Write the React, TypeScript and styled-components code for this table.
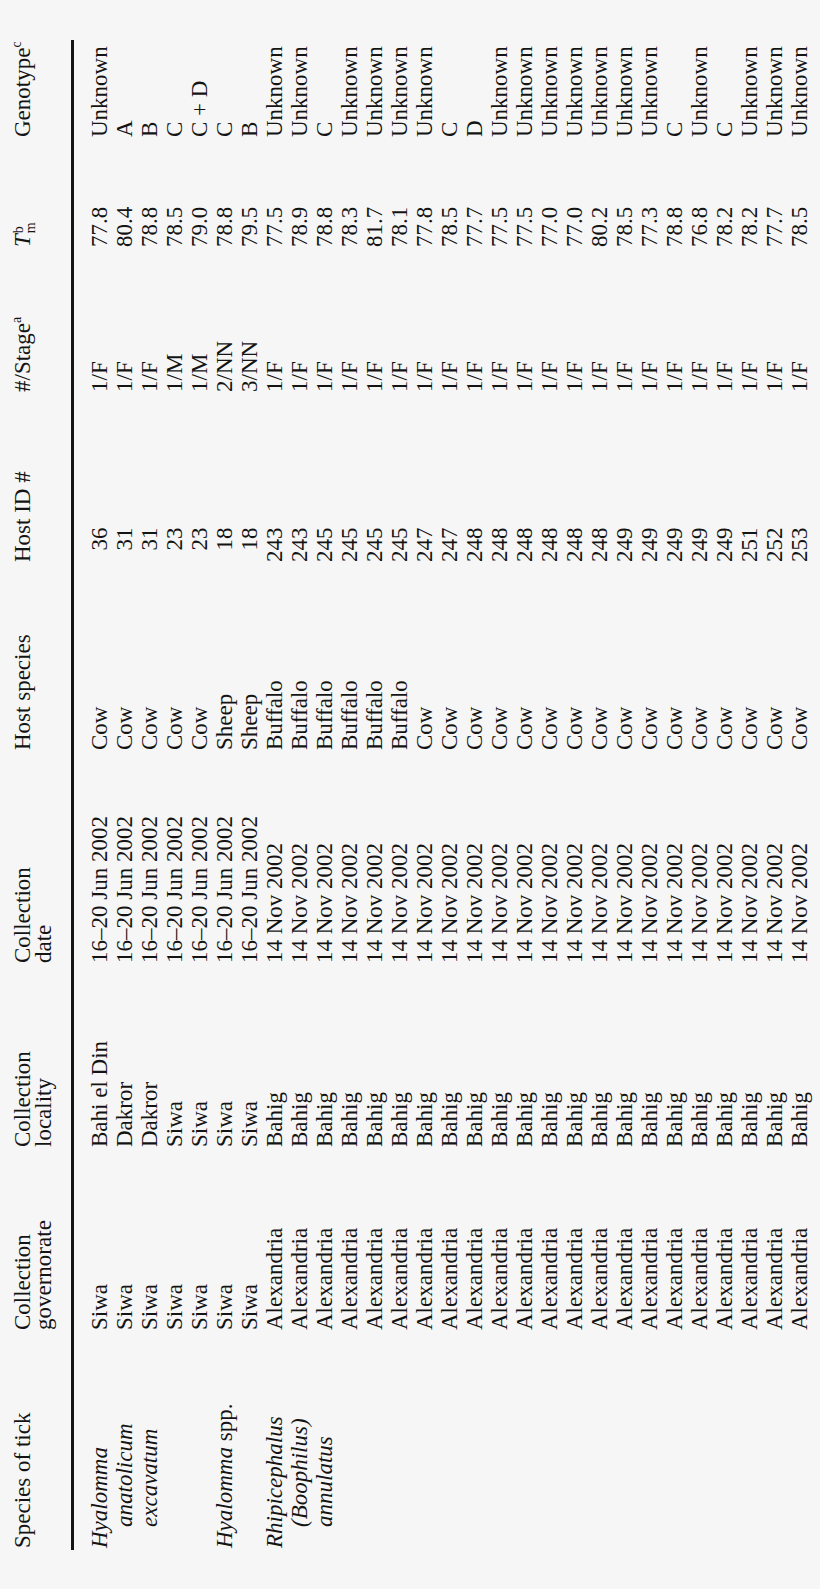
import React from 'react';
import styled, { createGlobalStyle } from 'styled-components';

// column widths of the unrotated table, left to right
const COLUMNS = '218px 183px 184px 213px 188px 170px 145px 110px 99px';

type Row = {
  species?: React.ReactNode;
  indent?: boolean;
  governorate: string;
  locality: string;
  date: string;
  host: string;
  hostId: string;
  stage: string;
  tm: string;
  genotype: string;
};

const JUN = '16–20 Jun 2002';
const NOV = '14 Nov 2002';

const siwa = (r: Partial<Row>): Row => ({
  governorate: 'Siwa',
  locality: 'Siwa',
  date: JUN,
  host: 'Cow',
  hostId: '',
  stage: '1/F',
  tm: '',
  genotype: 'Unknown',
  ...r,
});

const bahig = (r: Partial<Row>): Row => ({
  governorate: 'Alexandria',
  locality: 'Bahig',
  date: NOV,
  host: 'Cow',
  hostId: '',
  stage: '1/F',
  tm: '',
  genotype: 'Unknown',
  ...r,
});

const rows: Row[] = [
  siwa({ species: <em>Hyalomma</em>, locality: 'Bahi el Din', hostId: '36', tm: '77.8' }),
  siwa({ species: <em>anatolicum</em>, indent: true, locality: 'Dakror', hostId: '31', tm: '80.4', genotype: 'A' }),
  siwa({ species: <em>excavatum</em>, indent: true, locality: 'Dakror', hostId: '31', tm: '78.8', genotype: 'B' }),
  siwa({ hostId: '23', stage: '1/M', tm: '78.5', genotype: 'C' }),
  siwa({ hostId: '23', stage: '1/M', tm: '79.0', genotype: 'C + D' }),
  siwa({
    species: (
      <>
        <em>Hyalomma</em> spp.
      </>
    ),
    host: 'Sheep',
    hostId: '18',
    stage: '2/NN',
    tm: '78.8',
    genotype: 'C',
  }),
  siwa({ host: 'Sheep', hostId: '18', stage: '3/NN', tm: '79.5', genotype: 'B' }),
  bahig({ species: <em>Rhipicephalus</em>, host: 'Buffalo', hostId: '243', tm: '77.5' }),
  bahig({ species: <em>(Boophilus)</em>, indent: true, host: 'Buffalo', hostId: '243', tm: '78.9' }),
  bahig({ species: <em>annulatus</em>, indent: true, host: 'Buffalo', hostId: '245', tm: '78.8', genotype: 'C' }),
  bahig({ host: 'Buffalo', hostId: '245', tm: '78.3' }),
  bahig({ host: 'Buffalo', hostId: '245', tm: '81.7' }),
  bahig({ host: 'Buffalo', hostId: '245', tm: '78.1' }),
  bahig({ hostId: '247', tm: '77.8' }),
  bahig({ hostId: '247', tm: '78.5', genotype: 'C' }),
  bahig({ hostId: '248', tm: '77.7', genotype: 'D' }),
  bahig({ hostId: '248', tm: '77.5' }),
  bahig({ hostId: '248', tm: '77.5' }),
  bahig({ hostId: '248', tm: '77.0' }),
  bahig({ hostId: '248', tm: '77.0' }),
  bahig({ hostId: '248', tm: '80.2' }),
  bahig({ hostId: '249', tm: '78.5' }),
  bahig({ hostId: '249', tm: '77.3' }),
  bahig({ hostId: '249', tm: '78.8', genotype: 'C' }),
  bahig({ hostId: '249', tm: '76.8' }),
  bahig({ hostId: '249', tm: '78.2', genotype: 'C' }),
  bahig({ hostId: '251', tm: '78.2' }),
  bahig({ hostId: '252', tm: '77.7' }),
  bahig({ hostId: '253', tm: '78.5' }),
];

const App = () => {
  return (
    <Page>
      <GlobalStyle />
      <Sheet>
        <HeadRow>
          <HeadCell>Species of tick</HeadCell>
          <HeadCell>
            Collection
            <br />
            governorate
          </HeadCell>
          <HeadCell>
            Collection
            <br />
            locality
          </HeadCell>
          <HeadCell>
            Collection
            <br />
            date
          </HeadCell>
          <HeadCell>Host species</HeadCell>
          <HeadCell>Host ID #</HeadCell>
          <HeadCell>
            #/Stage<Note>a</Note>
          </HeadCell>
          <HeadCell>
            <em>T</em>
            <Scripts>
              <span>b</span>
              <span>m</span>
            </Scripts>
          </HeadCell>
          <HeadCell>
            Genotype<Note>c</Note>
          </HeadCell>
        </HeadRow>
        <Rule />
        <Body>
          {rows.map((r, i) => (
            <React.Fragment key={i}>
              <Cell $indent={r.indent}>{r.species}</Cell>
              <Cell>{r.governorate}</Cell>
              <Cell>{r.locality}</Cell>
              <Cell>{r.date}</Cell>
              <Cell>{r.host}</Cell>
              <Cell>
                <Figure>{r.hostId}</Figure>
              </Cell>
              <Cell>{r.stage}</Cell>
              <Cell>{r.tm}</Cell>
              <Cell>{r.genotype}</Cell>
            </React.Fragment>
          ))}
        </Body>
      </Sheet>
    </Page>
  );
};

const GlobalStyle = createGlobalStyle`
  html, body {
    margin: 0;
    padding: 0;
    background: #f6f6f6;
  }
`;

const Page = styled.div`
  width: 820px;
  height: 1589px;
  overflow: hidden;
  background: #f6f6f6;
`;

// the table is printed sideways: laid out flat, then turned a quarter left
const Sheet = styled.div`
  box-sizing: border-box;
  width: 1589px;
  height: 820px;
  padding: 12px 0 0 39px;
  transform-origin: 0 0;
  transform: translateY(1589px) rotate(-90deg);
  font-family: 'Liberation Serif', 'Times New Roman', serif;
  font-size: 23px;
  color: #141414;
`;

const HeadRow = styled.div`
  display: grid;
  grid-template-columns: ${COLUMNS};
  height: 59px;
  line-height: 21px;
`;

const HeadCell = styled.div`
  padding-left: 2px;
  white-space: nowrap;
`;

const Note = styled.sup`
  font-size: 14px;
  line-height: 0;
  vertical-align: 9px;
`;

// stacked super/subscript after the italic T
const Scripts = styled.span`
  display: inline-flex;
  flex-direction: column;
  font-size: 14px;
  line-height: 12px;
  vertical-align: 7px;
  margin-left: 1px;
`;

const Rule = styled.div`
  width: 1510px;
  height: 3px;
  background: #141414;
`;

const Body = styled.div`
  display: grid;
  grid-template-columns: ${COLUMNS};
  grid-auto-rows: 25px;
  margin-top: 13px;
  line-height: 25px;
`;

const Cell = styled.div<{ $indent?: boolean }>`
  padding-left: ${({ $indent }) => ($indent ? '23px' : '2px')};
  white-space: nowrap;

  em {
    font-style: italic;
  }
`;

const Figure = styled.span`
  display: inline-block;
  width: 1.5em;
  text-align: right;
`;

export default App;
